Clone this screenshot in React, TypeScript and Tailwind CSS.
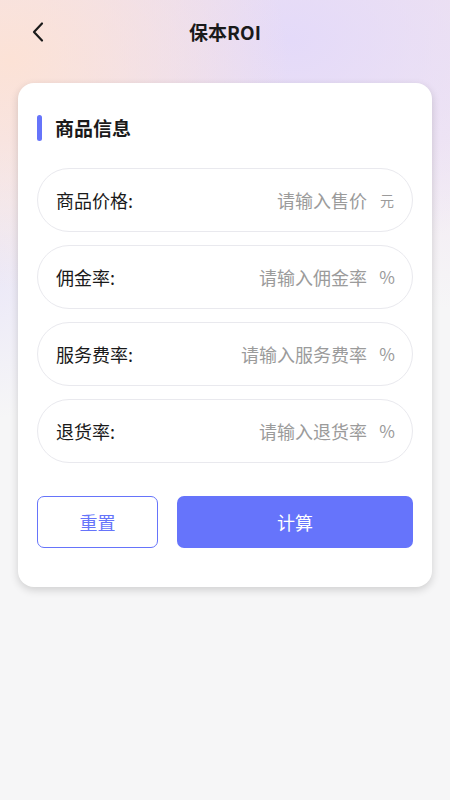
import React from "react";

const fields = [
  { label: "商品价格:", placeholder: "请输入售价", unit: "元" },
  { label: "佣金率:", placeholder: "请输入佣金率", unit: "%" },
  { label: "服务费率:", placeholder: "请输入服务费率", unit: "%" },
  { label: "退货率:", placeholder: "请输入退货率", unit: "%" },
];

export default function App() {
  return (
    <div
      className="min-h-[800px] w-[450px] bg-[#f6f6f7] bg-[radial-gradient(ellipse_280px_230px_at_10px_60px,#fce2d6_0%,rgba(252,226,214,0)_100%),radial-gradient(ellipse_320px_220px_at_290px_40px,#e4daf9_0%,rgba(228,218,249,0)_100%),radial-gradient(ellipse_160px_150px_at_-20px_270px,#ebe8f8_0%,rgba(235,232,248,0)_100%),linear-gradient(180deg,#f1e4ee_0px,#f2e8f2_140px,#f6f6f7_310px)]"
      style={{ fontFamily: '"Noto Sans CJK SC", "Noto Sans", sans-serif' }}
    >
      {/* Top bar */}
      <div className="relative flex h-[64px] items-center justify-center">
        <button className="absolute left-[26px] top-[20px] flex h-6 w-6 items-center justify-center text-[#1a1a1a]">
          <svg width="14" height="22" viewBox="0 0 14 22" fill="none">
            <path d="M11 2.5 L3 11 L11 19.5" stroke="currentColor" strokeWidth="2.2" strokeLinecap="round" strokeLinejoin="round" />
          </svg>
        </button>
        <h1 className="text-[19px] font-bold text-[#1a1a1a]">保本ROI</h1>
      </div>

      {/* Card */}
      <div className="mx-[18px] mt-[19px] rounded-[16px] bg-white px-[19px] pb-[39px] pt-[32px] shadow-[0_3px_8px_rgba(0,0,0,0.16)]">
        <div className="flex items-center gap-[13px]">
          <span className="h-[26px] w-[5px] rounded-full bg-[#6674fa]" />
          <span className="text-[19px] font-bold leading-[26px] text-[#1a1a1a]">商品信息</span>
        </div>

        <div className="mt-[27px] flex flex-col gap-[13px]">
          {fields.map((f) => (
            <div
              key={f.label}
              className="flex h-[64px] items-center rounded-full border border-[#e9e9ee] pl-[18px] pr-[17px]"
            >
              <span className="text-[18px] text-[#1a1a1a]">{f.label}</span>
              <span className="ml-auto text-[18px] text-[#9b9b9b]">{f.placeholder}</span>
              <span
                className={
                  f.unit === "元"
                    ? "ml-[12px] w-[16px] text-center text-[14px] text-[#9b9b9b]"
                    : "ml-[12px] w-[16px] text-center text-[17px] text-[#9b9b9b]"
                }
              >
                {f.unit}
              </span>
            </div>
          ))}
        </div>

        <div className="mt-[33px] flex gap-[19px]">
          <button className="h-[52px] w-[121px] rounded-[7px] border border-[#6674fa] text-[18px] text-[#6674fa]">
            重置
          </button>
          <button className="h-[52px] flex-1 rounded-[7px] bg-[#6674fb] text-[18px] text-white">
            计算
          </button>
        </div>
      </div>
    </div>
  );
}
